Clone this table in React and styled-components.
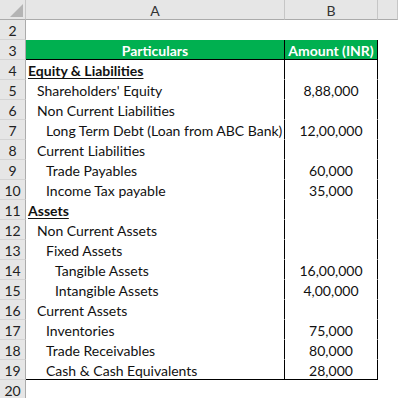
import React from "react";
import styled, { createGlobalStyle } from "styled-components";

const GlobalStyle = createGlobalStyle`
  html, body {
    margin: 0;
    padding: 0;
    background: #ffffff;
  }
  body {
    font-family: "Lato", "Liberation Sans", sans-serif;
  }
`;

const Sheet = styled.div`
  width: 398px;
  height: 398px;
  overflow: hidden;
  display: grid;
  grid-template-columns: 26px 259px 93px 1fr;
  grid-auto-rows: 20px;
  background: #ffffff;
`;

const ColHead = styled.div`
  box-sizing: border-box;
  background: #e6e6e6;
  border-right: 1px solid #c6c6c6;
  border-bottom: 1px solid #ababab;
  color: #333333;
  font-size: 14px;
  display: flex;
  align-items: center;
  justify-content: center;
  padding-top: 1px;
  position: relative;
`;

const Corner = styled.svg`
  position: absolute;
  left: 10px;
  top: 4px;
`;

const RowHead = styled.div`
  box-sizing: border-box;
  background: #e6e6e6;
  border-right: 1px solid #ababab;
  border-bottom: 1px solid #d4d4d4;
  color: #222222;
  font-size: 14px;
  display: flex;
  align-items: center;
  justify-content: center;
  padding-top: 2px;
`;

const Cell = styled.div`
  box-sizing: border-box;
  background: ${(p) => p.$bg || "#ffffff"};
  border-right: 1px solid ${(p) => p.$right || "transparent"};
  border-bottom: 1px solid ${(p) => p.$bottom || "transparent"};
  color: ${(p) => p.$color || "#111111"};
  font-size: 14px;
  font-weight: ${(p) => (p.$bold ? 700 : 400)};
  text-decoration: ${(p) => (p.$underline ? "underline" : "none")};
  text-underline-offset: 2px;
  display: flex;
  align-items: center;
  justify-content: ${(p) => p.$align || "flex-start"};
  padding-left: ${(p) => (p.$indent != null ? 2 + p.$indent * 9 : 0)}px;
  padding-top: 2px;
  white-space: nowrap;
`;

const rows = [
  { n: 4, label: "Equity & Liabilities", level: 0, heading: true },
  { n: 5, label: "Shareholders' Equity", level: 1, amount: "8,88,000" },
  { n: 6, label: "Non Current Liabilities", level: 1 },
  { n: 7, label: "Long Term Debt (Loan from ABC Bank)", level: 2, amount: "12,00,000" },
  { n: 8, label: "Current Liabilities", level: 1 },
  { n: 9, label: "Trade Payables", level: 2, amount: "60,000" },
  { n: 10, label: "Income Tax payable", level: 2, amount: "35,000" },
  { n: 11, label: "Assets", level: 0, heading: true },
  { n: 12, label: "Non Current Assets", level: 1 },
  { n: 13, label: "Fixed Assets", level: 2 },
  { n: 14, label: "Tangible Assets", level: 3, amount: "16,00,000" },
  { n: 15, label: "Intangible Assets", level: 3, amount: "4,00,000" },
  { n: 16, label: "Current Assets", level: 1 },
  { n: 17, label: "Inventories", level: 2, amount: "75,000" },
  { n: 18, label: "Trade Receivables", level: 2, amount: "80,000" },
  { n: 19, label: "Cash & Cash Equivalents", level: 2, amount: "28,000" },
];

const App = () => {
  return (
    <>
      <GlobalStyle />
      <Sheet>
        <ColHead>
          <Corner width="13" height="13" viewBox="0 0 13 13">
            <polygon points="13,0 13,13 0,13" fill="#b4b4b4" />
          </Corner>
        </ColHead>
        <ColHead>A</ColHead>
        <ColHead>B</ColHead>
        <ColHead />

        <RowHead>2</RowHead>
        <Cell />
        <Cell />
        <Cell />

        <RowHead>3</RowHead>
        <Cell $bg="#00b050" $color="#ffffff" $bold $align="center" $right="#000" $bottom="#000">
          Particulars
        </Cell>
        <Cell $bg="#00b050" $color="#ffffff" $bold $align="center" $right="#000" $bottom="#000">
          Amount (INR)
        </Cell>
        <Cell />

        {rows.map((r) => {
          const last = r.n === 19;
          return (
            <React.Fragment key={r.n}>
              <RowHead>{r.n}</RowHead>
              <Cell
                $indent={r.level}
                $bold={r.heading}
                $underline={r.heading}
                $right="#000"
                $bottom={last ? "#000" : undefined}
              >
                {r.label}
              </Cell>
              <Cell $align="center" $right="#000" $bottom={last ? "#000" : undefined}>
                {r.amount}
              </Cell>
              <Cell />
            </React.Fragment>
          );
        })}

        <RowHead>20</RowHead>
        <Cell />
        <Cell />
        <Cell />
      </Sheet>
    </>
  );
};

export default App;
